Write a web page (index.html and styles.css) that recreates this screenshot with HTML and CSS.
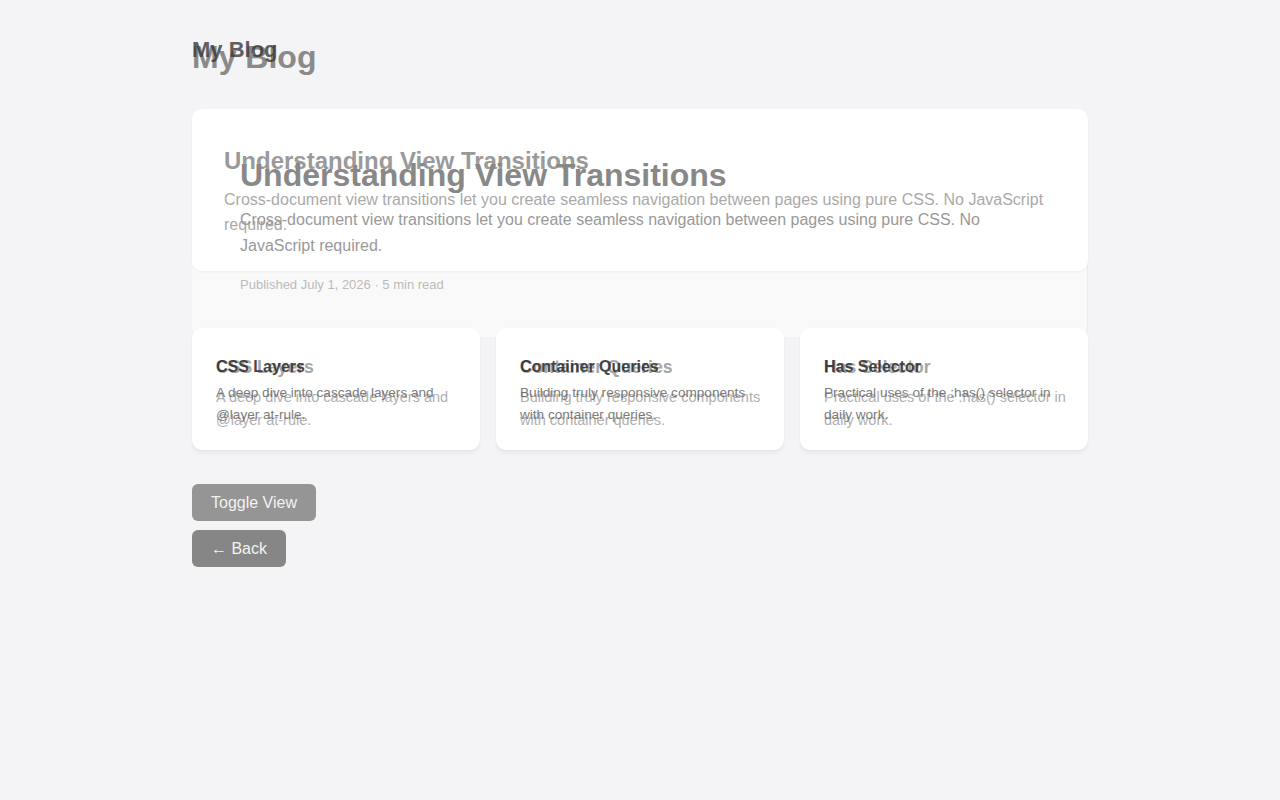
FILE: index.html
```html
<!DOCTYPE html>
<html lang="en">
<head>
    <meta charset="UTF-8">
    <meta name="viewport" content="width=device-width, initial-scale=1.0">
    <title>My Blog</title>
    <link rel="stylesheet" href="styles.css">
</head>
<body>

    <div class="page">

        <!-- header: outgoing and incoming snapshots share one grid cell -->
        <header class="masthead stack">
            <h1 class="site-title site-title-old">My Blog</h1>
            <h1 class="site-title site-title-new">My Blog</h1>
        </header>

        <section class="featured stack">
            <div class="hero-backdrop"></div>
            <article class="hero hero-old">
                <h2 class="hero-title">Understanding View Transitions</h2>
                <p class="hero-text">Cross-document view transitions let you create seamless navigation between pages using pure CSS. No JavaScript required.</p>
            </article>
            <article class="hero hero-new">
                <h2 class="hero-title">Understanding View Transitions</h2>
                <p class="hero-text">Cross-document view transitions let you create seamless navigation between pages using pure CSS. No JavaScript required.</p>
                <p class="hero-meta">Published July 1, 2026 &middot; 5 min read</p>
            </article>
        </section>

        <section class="posts">
            <div class="post stack">
                <div class="post-card post-old">
                    <h3 class="post-title">CSS Layers</h3>
                    <p class="post-text">A deep dive into cascade layers and @layer at-rule.</p>
                </div>
                <div class="post-card post-new">
                    <h3 class="post-title">CSS Layers</h3>
                    <p class="post-text">A deep dive into cascade layers and @layer at-rule.</p>
                </div>
            </div>
            <div class="post stack">
                <div class="post-card post-old">
                    <h3 class="post-title">Container Queries</h3>
                    <p class="post-text">Building truly responsive components with container queries.</p>
                </div>
                <div class="post-card post-new">
                    <h3 class="post-title">Container Queries</h3>
                    <p class="post-text">Building truly responsive components with container queries.</p>
                </div>
            </div>
            <div class="post stack">
                <div class="post-card post-old">
                    <h3 class="post-title">Has Selector</h3>
                    <p class="post-text">Practical uses of the :has() selector in daily work.</p>
                </div>
                <div class="post-card post-new">
                    <h3 class="post-title">Has Selector</h3>
                    <p class="post-text">Practical uses of the :has() selector in daily work.</p>
                </div>
            </div>
        </section>

        <div class="actions">
            <button class="btn btn-toggle">Toggle View</button>
            <button class="btn btn-back">&larr; Back</button>
        </div>

    </div>

</body>
</html>
```

FILE: styles.css
```css
body {
    margin: 0;
    font-family: "Liberation Sans", Arial, sans-serif;
    background-color: #f4f4f6;
}
.page {
    width: 896px;
    margin: 0 auto;
    padding-top: 36px;
}

/* both snapshots sit in the same grid cell */
.stack {
    display: grid;
    align-items: start;
}
.stack > * {
    grid-area: 1 / 1;
}

/* header */
.masthead {
    margin-bottom: 33px;
}
.site-title {
    margin: 0;
    font-weight: bold;
}
.site-title-old {
    font-size: 22px;
    line-height: 26px;
    margin-top: 1px;
    color: #3a3a3a;
    opacity: 0.8;
}
.site-title-new {
    font-size: 32px;
    line-height: 37px;
    margin-top: 3px;
    color: #8a8a8a;
}

/* featured post */
.hero-backdrop {
    height: 228px;
    margin-bottom: -9px;
    border-radius: 10px;
    background-color: #f9f9fa;
    border-right: 1px solid #ebebed;
}
.hero {
    box-sizing: border-box;
    border-radius: 10px;
}
.hero-title {
    margin: 0;
    font-weight: bold;
}
.hero-text {
    margin: 0;
}
.hero-old {
    height: 162px;
    padding: 37px 32px 0;
    background-color: #fff;
    box-shadow: 0 1px 3px rgba(0, 0, 0, 0.05);
}
.hero-old .hero-title {
    font-size: 24px;
    line-height: 29px;
    color: #9a9a9a;
}
.hero-old .hero-text {
    margin-top: 12px;
    font-size: 16px;
    line-height: 25px;
    color: #aaa;
}
.hero-new {
    padding: 47px 48px 0;
}
.hero-new .hero-title {
    font-size: 32px;
    line-height: 38px;
    color: #888;
}
.hero-new .hero-text {
    max-width: 760px;
    margin-top: 13px;
    font-size: 16px;
    line-height: 26px;
    color: #999;
}
.hero-meta {
    margin: 16px 0 0;
    font-size: 13px;
    line-height: 20px;
    color: #bbb;
}

/* post cards */
.posts {
    display: grid;
    grid-template-columns: repeat(3, 1fr);
    gap: 16px;
}
.post-card {
    box-sizing: border-box;
    border-radius: 10px;
}
.post-title {
    margin: 0;
    font-weight: bold;
}
.post-text {
    margin: 0;
}
.post-old {
    height: 122px;
    margin-bottom: 5px;
    padding: 28px 20px 0 24px;
    background-color: #fff;
    box-shadow: 0 1px 3px rgba(0, 0, 0, 0.05), 0 5px 2px rgba(0, 0, 0, 0.025);
}
.post-old .post-title {
    font-size: 17.6px;
    line-height: 22px;
    color: #a6a6a6;
}
.post-old .post-text {
    margin-top: 8px;
    font-size: 14.5px;
    line-height: 23px;
    color: #b0b0b0;
}
.post-new {
    height: 122px;
    padding: 29px 24px 0;
}
.post-new .post-title {
    font-size: 16px;
    line-height: 20px;
    color: #333;
    opacity: 0.9;
}
.post-new .post-text {
    margin-top: 5px;
    font-size: 13.6px;
    line-height: 22px;
    color: #666;
    opacity: 0.85;
}

/* buttons */
.actions {
    display: flex;
    flex-direction: column;
    align-items: flex-start;
    gap: 9px;
    margin-top: 29px;
}
.btn {
    height: 37px;
    padding: 0 19px;
    border: none;
    border-radius: 6px;
    font-family: inherit;
    font-size: 16px;
    color: #f2f2f2;
    cursor: pointer;
}
.btn-toggle {
    background-color: #959595;
}
.btn-back {
    background-color: #868686;
}
```
